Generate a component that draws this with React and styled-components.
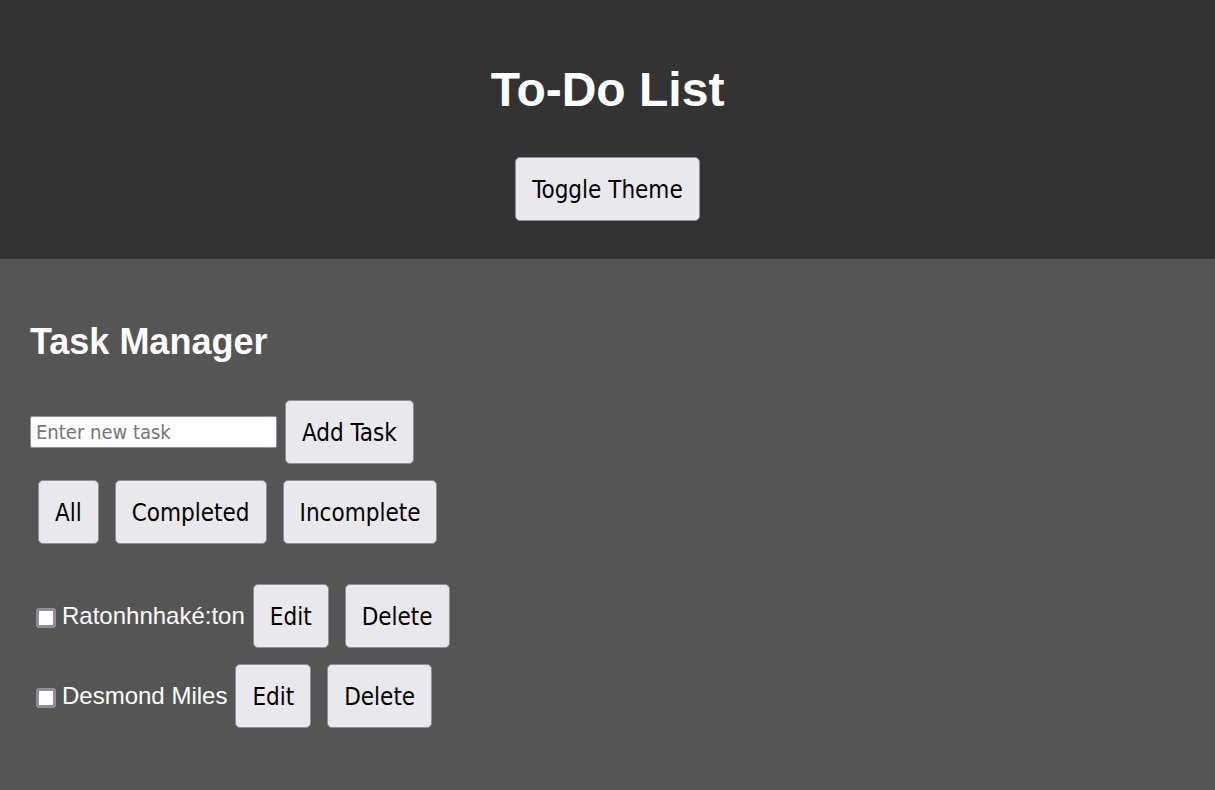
import React, { useState } from 'react';
import styled, { createGlobalStyle } from 'styled-components';

const GlobalStyle = createGlobalStyle`
  html, body {
    margin: 0;
    padding: 0;
    background: #555555;
    font-family: "Liberation Sans", Arial, sans-serif;
  }
`;

const Page = styled.div`
  min-height: 100vh;
  background: #555555;
  color: #ffffff;
`;

const Header = styled.header`
  background: #333333;
  padding: 62px 0 38px;
  display: flex;
  flex-direction: column;
  align-items: center;
`;

const Title = styled.h1`
  margin: 0 0 40px;
  font-size: 48px;
  line-height: 55px;
  font-weight: 700;
  color: #ffffff;
`;

const Button = styled.button`
  margin: ${props => (props.flush ? '0' : '8px')};
  padding: 19px 16px 16px;
  font-family: "DejaVu Sans Condensed", "DejaVu Sans", sans-serif;
  font-size: 24px;
  line-height: 27px;
  color: #000000;
  background: #e9e8ed;
  border: 1px solid #8f8f9d;
  border-radius: 5px;
  cursor: pointer;

  &:hover {
    background: #d0cfd7;
  }
`;

const Main = styled.main`
  padding: 62px 30px 30px;
`;

const Heading = styled.h2`
  margin: 0 0 30px;
  font-size: 36px;
  line-height: 41px;
  font-weight: 700;
`;

const Row = styled.div`
  display: flex;
  align-items: center;
`;

const FilterRow = styled.div`
  display: flex;
  align-items: center;
  margin-bottom: 24px;
`;

const TaskInput = styled.input`
  width: 247px;
  height: 32px;
  box-sizing: border-box;
  padding: 3px 5px;
  font-family: "DejaVu Sans Condensed", "DejaVu Sans", sans-serif;
  font-size: 20px;
  border: 1px solid #8f8f9d;
  border-radius: 2px;
  background: #ffffff;
  color: #000000;

  &::placeholder {
    color: #757575;
  }
`;

const TaskList = styled.ul`
  list-style: none;
  margin: 0;
  padding: 0;
`;

const TaskItem = styled.li`
  display: flex;
  align-items: center;
`;

const Check = styled.input`
  -webkit-appearance: none;
  appearance: none;
  display: block;
  flex: none;
  width: 20px;
  height: 20px;
  margin: 3px 6px 0 6px;
  box-sizing: border-box;
  border: 3px solid #8f8d9a;
  border-radius: 3px;
  background: #ffffff;
  cursor: pointer;

  &:checked {
    background: #0060df;
    border-color: #0060df;
  }
`;

const TaskText = styled.span`
  font-size: 24px;
  color: #ffffff;
  text-decoration: ${props => (props.done ? 'line-through' : 'none')};
`;

const initialTasks = [
  { id: 1, text: 'Ratonhnhaké:ton', completed: false },
  { id: 2, text: 'Desmond Miles', completed: false },
];

export default function App() {
  const [tasks, setTasks] = useState(initialTasks);
  const [draft, setDraft] = useState('');
  const [filter, setFilter] = useState('all');

  const addTask = () => {
    if (!draft.trim()) return;
    setTasks([...tasks, { id: Date.now(), text: draft.trim(), completed: false }]);
    setDraft('');
  };

  const toggle = id =>
    setTasks(tasks.map(t => (t.id === id ? { ...t, completed: !t.completed } : t)));

  const remove = id => setTasks(tasks.filter(t => t.id !== id));

  const edit = id => {
    const task = tasks.find(t => t.id === id);
    const text = window.prompt('Edit task', task.text);
    if (text) setTasks(tasks.map(t => (t.id === id ? { ...t, text } : t)));
  };

  const visible = tasks.filter(t =>
    filter === 'completed' ? t.completed : filter === 'incomplete' ? !t.completed : true
  );

  return (
    <Page>
      <GlobalStyle />
      <Header>
        <Title>To-Do List</Title>
        <Button flush>Toggle Theme</Button>
      </Header>
      <Main>
        <Heading>Task Manager</Heading>
        <Row>
          <TaskInput
            placeholder="Enter new task"
            value={draft}
            onChange={e => setDraft(e.target.value)}
          />
          <Button onClick={addTask}>Add Task</Button>
        </Row>
        <FilterRow>
          <Button onClick={() => setFilter('all')}>All</Button>
          <Button onClick={() => setFilter('completed')}>Completed</Button>
          <Button onClick={() => setFilter('incomplete')}>Incomplete</Button>
        </FilterRow>
        <TaskList>
          {visible.map(task => (
            <TaskItem key={task.id}>
              <Check
                type="checkbox"
                checked={task.completed}
                onChange={() => toggle(task.id)}
              />
              <TaskText done={task.completed}>{task.text}</TaskText>
              <Button onClick={() => edit(task.id)}>Edit</Button>
              <Button onClick={() => remove(task.id)}>Delete</Button>
            </TaskItem>
          ))}
        </TaskList>
      </Main>
    </Page>
  );
}
